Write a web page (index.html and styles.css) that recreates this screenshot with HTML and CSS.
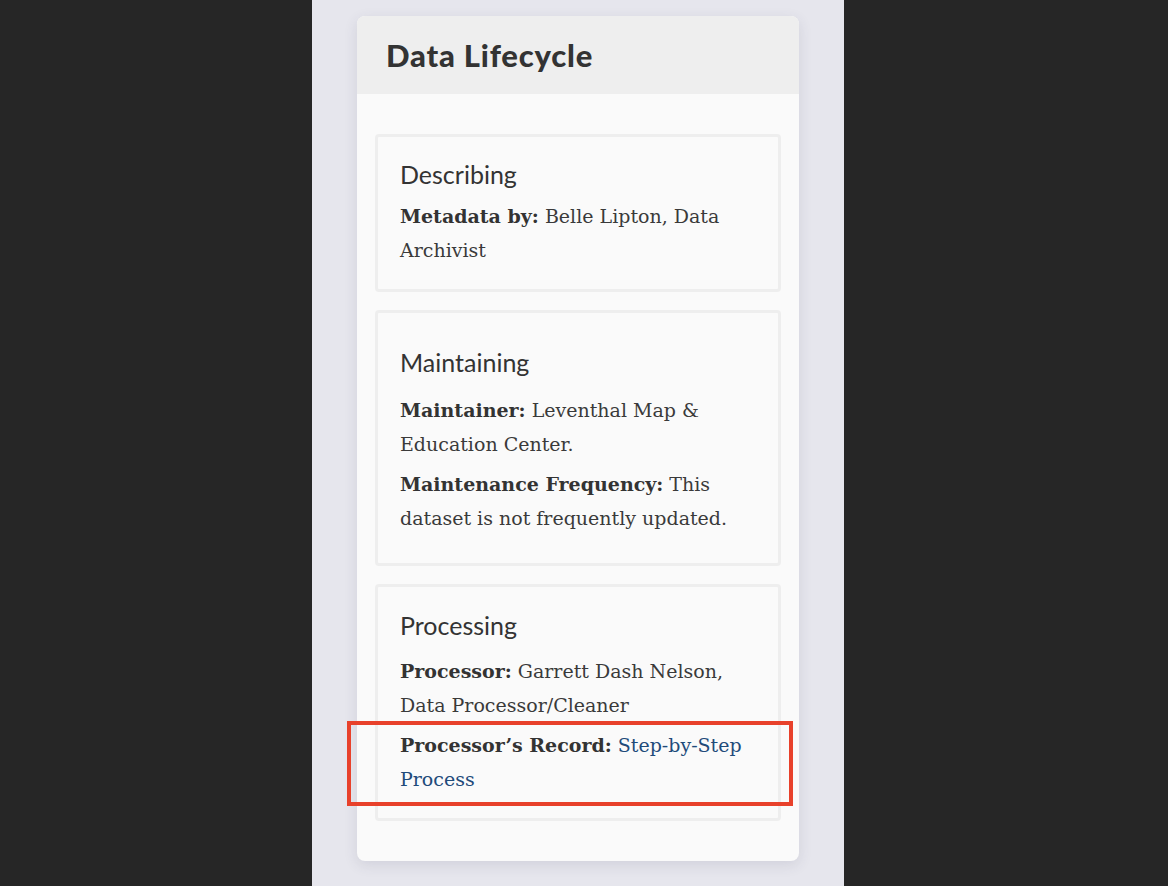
FILE: index.html
```html
<!DOCTYPE html>
<html>
<head>
<meta charset="utf-8">
<link rel="stylesheet" href="styles.css">
</head>
<body>
<div class="stage">
  <div class="panel">
    <section class="card">
      <header class="card-head"><h1>Data Lifecycle</h1></header>
      <div class="card-body">
        <div class="stage-box box-describe">
          <h2>Describing</h2>
          <p><b>Metadata by:</b> Belle Lipton, Data Archivist</p>
        </div>
        <div class="stage-box box-maintain">
          <h2>Maintaining</h2>
          <p><b>Maintainer:</b> Leventhal Map &amp; Education Center.</p>
          <p><b>Maintenance Frequency:</b> This dataset is not frequently updated.</p>
        </div>
        <div class="stage-box box-process">
          <h2>Processing</h2>
          <p><b>Processor:</b> Garrett Dash Nelson, Data Processor/Cleaner</p>
          <p class="highlighted"><b>Processor’s Record:</b> <a href="#">Step-by-Step Process</a></p>
        </div>
      </div>
    </section>
  </div>
</div>
</body>
</html>
```

FILE: styles.css
```css
html, body {
  margin: 0;
  padding: 0;
  background: #262626;
  height: 100%;
}
.stage {
  display: flex;
  justify-content: center;
  height: 886px;
  overflow: hidden;
}
.panel {
  width: 532px;
  margin-right: 12px;
  background: #e6e6ed;
  padding: 16px 45px 0 45px;
  box-sizing: border-box;
}
.card {
  background: #fafafa;
  border-radius: 8px;
  box-shadow: 0 4px 14px rgba(60, 60, 90, 0.12);
}
.card-head {
  background: #eeeeee;
  border-radius: 8px 8px 0 0;
  height: 78px;
  display: flex;
  align-items: center;
  padding-left: 29px;
}
.card-head h1 {
  margin: 0;
  font-family: "Lato", sans-serif;
  font-weight: 900;
  font-size: 31px;
  color: #333333;
  letter-spacing: 0.8px;
}
.card-body {
  padding: 40px 18px 40px 18px;
  display: flex;
  flex-direction: column;
  gap: 18px;
}
.stage-box {
  border: 3px solid #eeeeee;
  border-radius: 4px;
  padding: 22px 22px 22px 22px;
}
.box-maintain {
  padding-top: 34px;
  padding-bottom: 28px;
}
.box-process {
  padding-top: 23px;
  padding-bottom: 22px;
}
.stage-box h2 {
  margin: 0 0 10px 0;
  font-family: "Lato", sans-serif;
  font-weight: 400;
  font-size: 25px;
  line-height: 30px;
  color: #333333;
}
.box-maintain h2 {
  margin-bottom: 16px;
}
.box-process h2 {
  margin-bottom: 14px;
}
.stage-box p {
  margin: 0 0 6px 0;
  font-family: "DejaVu Serif", serif;
  font-size: 19px;
  line-height: 34px;
  color: #3a3a3a;
}
.stage-box p:last-child {
  margin-bottom: 0;
}
.stage-box p b {
  color: #333333;
}
.stage-box a {
  color: #1f4b7a;
  text-decoration: none;
}
.highlighted {
  position: relative;
}
.highlighted::after {
  content: "";
  position: absolute;
  left: -53px;
  right: -37px;
  top: -7px;
  bottom: -10px;
  border: 4px solid #e8412b;
}
```
